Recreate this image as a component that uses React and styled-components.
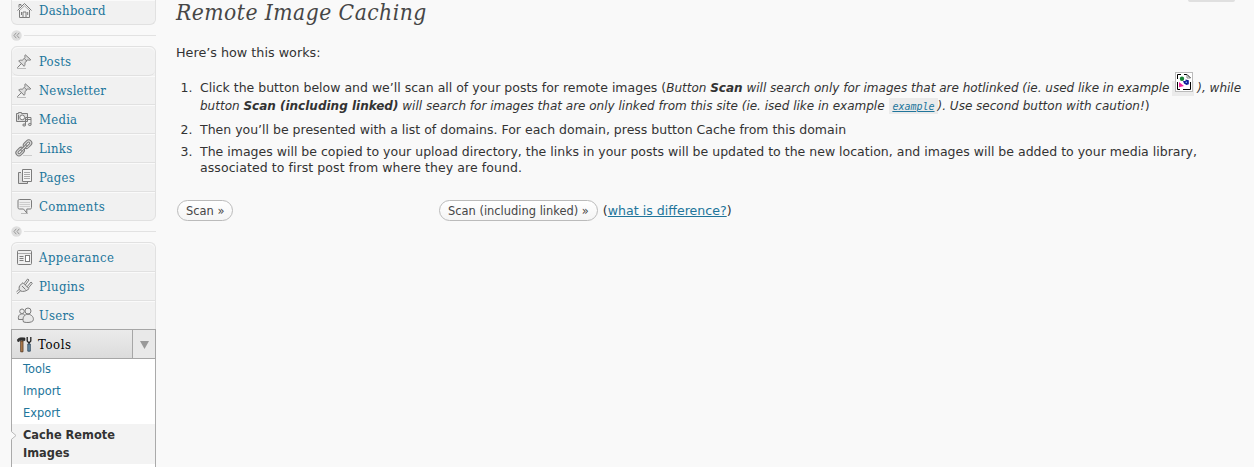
import React from 'react';
import styled, { createGlobalStyle } from 'styled-components';

const sans = '"DejaVu Sans", Verdana, sans-serif';
const serif = '"DejaVu Serif Condensed", "DejaVu Serif", Georgia, serif';

const GlobalStyle = createGlobalStyle`
  body { margin: 0; background: #f9f9f9; color: #333; font-family: ${sans}; overflow: hidden; }
  * { box-sizing: border-box; }
`;

const Page = styled.div`
  display: flex;
  height: 467px;
  overflow: hidden;
`;

const Sidebar = styled.nav`
  width: 145px;
  margin-left: 11px;
  flex: none;
`;

const MenuGroup = styled.div`
  border: 1px solid #e1e1e1;
  border-top-width: ${p => (p.$cut ? 0 : 1)}px;
  border-bottom-width: ${p => (p.$open ? 0 : 1)}px;
  border-radius: ${p => (p.$cut ? '0 0 6px 6px' : p.$open ? '6px 6px 0 0' : '6px')};
  background: #f1f1f1;
`;

const MenuItem = styled.a`
  display: flex;
  align-items: flex-start;
  height: ${p => (p.$cut ? 24 : 29)}px;
  padding-left: 4px;
  gap: 6px;
  color: #21759b;
  font: 13px/27px ${serif};
  letter-spacing: ${p => p.$spacing ?? 0.25}px;
  border-bottom: 1px solid #e1e1e1;
  box-shadow: inset 0 1px #fafafa;
  border-radius: inherit;
  &:not(:first-child) { border-radius: 0; }
  &:last-child { border-bottom-color: transparent; height: ${p => (p.$cut ? 24 : 28)}px; }
  svg { flex: none; margin-top: ${p => (p.$cut ? 2 : 6)}px; }
  span { margin-top: ${p => (p.$cut ? -4 : 0)}px; }
`;

const MenuLabel = styled.span`
  padding-top: 1px;
`;

const Separator = styled.div`
  display: flex;
  align-items: center;
  height: 21px;
  gap: 2px;
  &::after { content: ''; flex: 1; height: 1px; background: #e2e2e2; }
`;

const ToolsHead = styled.div`
  display: flex;
  height: 30px;
  border: 1px solid #a6a6a6;
  background: linear-gradient(#ebebeb, #dcdcdc);
  color: #000;
  font: 13px/27px ${serif};
  letter-spacing: 0.6px;
`;

const ToolsLabel = styled.div`
  display: flex;
  flex: 1;
  align-items: center;
  gap: 5px;
  padding-left: 4px;
`;

const Toggle = styled.div`
  display: flex;
  width: 23px;
  align-items: center;
  justify-content: center;
  padding-top: 2px;
  border-left: 1px solid #a6a6a6;
  background: #e9e9e9;
`;

const Submenu = styled.div`
  height: 120px;
  border: 1px solid #aaa;
  border-width: 0 1px;
  background: #fff;
`;

const SubItem = styled.a`
  display: block;
  padding-left: 11px;
  color: #21759b;
  font-size: 11.4px;
  line-height: 22px;
  &:first-child { line-height: 20px; padding-bottom: 1px; }
`;

const CurrentItem = styled(SubItem)`
  position: relative;
  padding: 2px 0 2px 11px;
  background: #f3f3f3;
  color: #333;
  font-weight: bold;
  line-height: 18px;
`;

const Notch = styled.svg`
  position: absolute;
  left: -2px;
  top: 6px;
`;

const Main = styled.main`
  flex: 1;
  padding-left: 20px;
  white-space: nowrap;
`;

const Title = styled.h2`
  margin: 0;
  height: 45px;
  color: #464646;
  font: italic 22.6px/25px ${serif};
  letter-spacing: 0.48px;
`;

const Intro = styled.p`
  margin: 0 0 19px;
  font-size: 12.75px;
  line-height: 16px;
`;

const Steps = styled.ol`
  display: grid;
  gap: 6px;
  margin: 0;
  padding: 0 0 0 24px;
  font-size: 12.51px;
  line-height: 16px;
  em { font-size: 12px; }
`;

const Step = styled.li`
  padding-bottom: ${p => p.$after ?? 0}px;
  &::marker { content: counter(list-item) ".\\2002\\200A"; }
`;

const Line = styled.span`
  display: block;
  height: 16px;
  margin-top: ${p => p.$gap ?? 0}px;
  letter-spacing: ${p => p.$spacing ?? 0}px;
`;

const Code = styled.code`
  display: inline-block;
  height: 16px;
  margin-left: 1px;
  padding: 0 3px;
  background: #ebebeb;
  color: #21759b;
  font: italic 10px/17px "DejaVu Sans Mono", monospace;
  text-decoration: underline;
  vertical-align: top;
`;

const ImageCode = styled.code`
  position: relative;
  display: inline-block;
  width: 22px;
  height: 15px;
  margin: 1px 3px 0 -1px;
  background: #ebebeb;
  vertical-align: top;
  svg { position: absolute; left: 3px; bottom: 4px; }
`;

const Actions = styled.div`
  display: flex;
  align-items: center;
  margin: 24px 0 0 1px;
  font-size: 12.6px;
`;

const ScanCell = styled.div`
  width: 262px;
`;

const Button = styled.button`
  height: 21px;
  padding: 0 8px;
  border: 1px solid #bbb;
  border-radius: 11px;
  background: linear-gradient(#fff, #f5f5f5);
  color: #464646;
  font: 11.45px/18px ${sans};
`;

const Help = styled.span`
  margin-left: 5px;
  a { color: #21759b; text-decoration: underline; }
`;

const HelpTab = styled.div`
  position: absolute;
  left: 1188px;
  top: 0;
  width: 47px;
  height: 2px;
  border-radius: 0 0 3px 3px;
  background: #e0e0e0;
`;

const shapes = {
  home: <><path d="M1.5 8.5 8.5 1.5l7 7M3.5 8v7.5h10V8M3 5.5V2.5h2v1.5" /><path d="M4 8 8.5 3.8 13 8" stroke="#aaa" /><path d="M7 15v-5h3v5M5.5 10v3M11.7 10v3" /></>,
  pin: <><path d="m9.3 1.8 5.5 5c-1.3.6-2.2.4-3 0L8.9 9.7c.3 1.4.1 2.6-.7 3.6L2.7 8c1-.9 2.2-1 3.5-.7l3-2.8c-.5-1-.5-1.9.1-2.7Z" fill="#ddd" /><path d="m5.3 10.7-4 4.1M8.5 5.8l2.5 2.4" /><path d="M1 15.5h9" stroke="#bbb" /></>,
  media: <><path d="M.5 2.5h2v-1h3v1h6v8H.5z" fill="#ddd" /><circle cx="6.2" cy="6.4" r="2.4" fill="#f6f6f6" /><path d="M2.5 3.8v5" /><path d="M9.5 14V6.5h5.5V13M9.5 8.5H15" fill="none" /><ellipse cx="8.2" cy="14" rx="1.4" ry="1.1" fill="#ccc" /><ellipse cx="13.8" cy="13.5" rx="1.4" ry="1.1" fill="#ccc" /></>,
  link: <><g transform="rotate(-45 8 8)"><rect x="-2" y="4.7" width="9.5" height="6.2" rx="3.1" fill="#ddd" /><rect x=".2" y="6.7" width="5" height="2.2" rx="1.1" fill="#fafafa" /><rect x="8.5" y="4.7" width="9.5" height="6.2" rx="3.1" fill="#ddd" /><rect x="10.8" y="6.7" width="5" height="2.2" rx="1.1" fill="#fafafa" /><rect x="4" y="6.9" width="8" height="1.9" rx=".9" fill="#eee" /></g><path d="M7 15.5h9" stroke="#ccc" /></>,
  pages: <><path d="M5 3.5H2.5v11h9v-2" fill="#ddd" /><path d="M6.5.5h9v12h-9z" fill="#f4f4f4" /><path d="M8 3.5h6M8 5.5h6M8 7.5h6M8 9.5h6" stroke="#aaa" /></>,
  comment: <><path d="M3.5 1.5H14c1 0 1.5.5 1.5 1.5v6.5c0 1-.5 1.5-1.5 1.5h-3.2V15l-3.3-4h-4C2.5 11 2 10.5 2 9.5V3c0-1 .5-1.5 1.5-1.5Z" fill="#eee" /><path d="M3.5 4.5H14M3.5 6.5H14M3.5 8.5H14" stroke="#ccc" /><path d="M5 15.5h7" stroke="#bbb" /></>,
  appearance: <><rect x="1.5" y="1.5" width="14" height="14" rx="1" fill="#eee" /><path d="M2 4.5h13" stroke="#aaa" /><path d="M3.5 7.5h4M3.5 9.5h4M3.5 11.5h4" /><rect x="9.5" y="6.5" width="4" height="6" fill="#fff" /></>,
  plug: <><path d="M3.8 7.5 7 4.7l6 6C10.5 13.3 7 14 4.6 13c-1.7-1.5-2-3.5-.8-5.5Z" fill="#e4e4e4" /><path d="M8 5.7 11.6 1l1.4 1-3.7 5m1.8 1.8L15 4l1.3 1.2-3.8 4.7M6 8l3.5 3.5M4.7 12.8l-3.5 3M3.3 11.3.5 13.8" /></>,
  users: <><circle cx="6" cy="4.3" r="2.3" fill="#eee" /><path d="M2.5 12.5c-.7-3 .7-5.7 3.5-5.7s3 1.7 3 2.7v3Z" fill="#e4e4e4" /><circle cx="12" cy="4" r="3" fill="#eee" /><path d="M7.5 15c-1.5-4 .5-7.7 4.5-7.7s6.3 3.7 5.1 6.4c-1.5 2-6.3 2.2-9.6 1.3Z" fill="#e8e8e8" /></>,
  tools: <><path d="M1.5 5V3.4C2.5 2 4.5 1.5 9 2v2.5l-2.2.3-1.3-.6-2 .6L2.5 6Z" fill="#333" stroke="#222" strokeWidth=".6" /><path d="M4.7 5H7v10.8H4.7z" fill="#b88352" stroke="#4b3019" strokeWidth=".8" /><path d="M11.2 1v4l1.2 1.4h1.2L14.8 5V1M13 6v4" stroke="#222" strokeWidth="1.3" /><path d="M11.8 8h2.5v7.2h-2.5z" fill="#668da9" stroke="#263f54" strokeWidth=".8" /></>,
};

const Icon = ({ name }) => (
  <svg width="17" height="17" viewBox="0 0 17 17" fill="none" stroke="#7c7c7c" strokeWidth="1" overflow="visible">{shapes[name]}</svg>
);

const Collapse = () => (
  <Separator>
    <svg width="11" height="11" viewBox="0 0 11 11" fill="none">
      <circle cx="5.5" cy="5.5" r="5.2" fill="#dedede" />
      <path d="M5.3 2.8 3 5.5l2.3 2.7M8.3 2.8 6 5.5l2.3 2.7" stroke="#999" />
    </svg>
  </Separator>
);

const Picture = () => (
  <svg width="18" height="20" viewBox="0 0 18 20">
    <rect x=".5" y=".5" width="17" height="19" fill="#fff" stroke="#bbb" />
    <path d="M6 2.5H2.5V7M9 2.5h3l3.5 3.5M2.5 10v7.5H5M15.5 10v7.5H8" fill="none" stroke="#000" />
    <path d="M12 2.5V6h3.5" fill="none" stroke="#888" />
    <circle cx="7" cy="6.8" r="2.2" fill="#168336" />
    <path d="m4 10 5 4-5 1.3Z" fill="#f024a0" />
    <path d="M8 9h2.5V7.5l3.3.7v4L11.5 13 9 11.5Z" fill="#121b98" />
    <circle cx="11.3" cy="10.2" r=".8" fill="#8dc2ff" />
  </svg>
);

const content = [
  ['pin', 'Posts'], ['pin', 'Newsletter', 0.12], ['media', 'Media'],
  ['link', 'Links'], ['pages', 'Pages'], ['comment', 'Comments', 0.35],
];
const admin = [['appearance', 'Appearance', 0.45], ['plug', 'Plugins'], ['users', 'Users']];

const Items = ({ items }) => items.map(([icon, label, spacing]) => (
  <MenuItem key={label} $spacing={spacing}><Icon name={icon} /><MenuLabel>{label}</MenuLabel></MenuItem>
));

export default function App() {
  return (
    <Page>
      <GlobalStyle />
      <Sidebar>
        <MenuGroup $cut><MenuItem $cut><Icon name="home" /><MenuLabel>Dashboard</MenuLabel></MenuItem></MenuGroup>
        <Collapse />
        <MenuGroup><Items items={content} /></MenuGroup>
        <Collapse />
        <MenuGroup $open><Items items={admin} /></MenuGroup>
        <ToolsHead>
          <ToolsLabel><Icon name="tools" /><MenuLabel>Tools</MenuLabel></ToolsLabel>
          <Toggle><svg width="9" height="8"><path d="M0 0h9L4.5 8Z" fill="#999" /></svg></Toggle>
        </ToolsHead>
        <Submenu>
          <SubItem>Tools</SubItem>
          <SubItem>Import</SubItem>
          <SubItem>Export</SubItem>
          <CurrentItem>
            <Notch width="7" height="11"><path d="M0 0 6 5.5 0 11Z" fill="#f9f9f9" /><path d="M1 1.2 6 5.5 1 9.8" fill="none" stroke="#bbb" /></Notch>
            Cache Remote<br />Images
          </CurrentItem>
        </Submenu>
      </Sidebar>
      <Main>
        <Title>Remote Image Caching</Title>
        <Intro>Here’s how this works:</Intro>
        <Steps>
          <Step $after={2}>
            <Line>
              Click the button below and we’ll scan all of your posts for remote images (<em>Button <b>Scan</b> will search only for images that are hotlinked (ie. used like in example <ImageCode><Picture /></ImageCode>), while</em>
            </Line>
            <Line $gap={2}>
              <em>button <b>Scan (including linked)</b> will search for images that are only linked from this site (ie. ised like in example <Code>example</Code>). Use second button with caution!</em>)
            </Line>
          </Step>
          <Step><Line>Then you’ll be presented with a list of domains. For each domain, press button Cache from this domain</Line></Step>
          <Step>
            <Line $spacing={0.007}>The images will be copied to your upload directory, the links in your posts will be updated to the new location, and images will be added to your media library,</Line>
            <Line $spacing={0.08}>associated to first post from where they are found.</Line>
          </Step>
        </Steps>
        <Actions>
          <ScanCell><Button>Scan »</Button></ScanCell>
          <Button>Scan (including linked) »</Button>
          <Help>(<a>what is difference?</a>)</Help>
        </Actions>
      </Main>
      <HelpTab />
    </Page>
  );
}
